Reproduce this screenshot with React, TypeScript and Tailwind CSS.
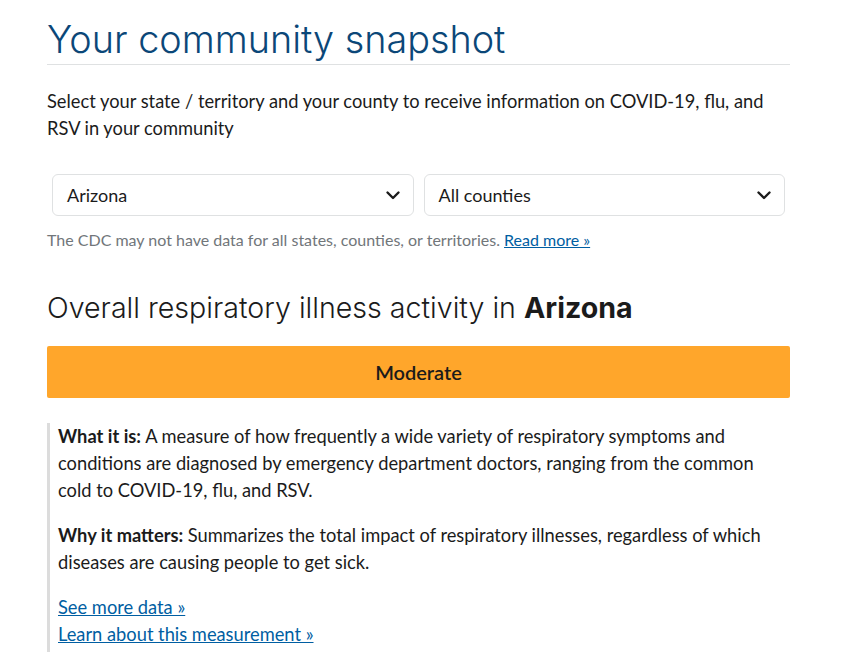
import React from 'react';

const Chevron: React.FC = () => (
  <svg width="16" height="16" viewBox="0 0 16 16" fill="none" aria-hidden="true">
    <path d="M2.5 5.5 8 11l5.5-5.5" stroke="#1b1b1b" strokeWidth="2.4" strokeLinecap="round" strokeLinejoin="round" />
  </svg>
);

const Select: React.FC<{ value: string }> = ({ value }) => (
  <div className="flex-1 h-[42px] flex items-center justify-between pl-[14px] pr-[12px] border border-[#dfe1e2] rounded-[6px] bg-white text-[18px] text-[#1b1b1b]">
    <span>{value}</span>
    <Chevron />
  </div>
);

export default function App() {
  return (
    <div className="bg-white min-h-screen font-['Lato',sans-serif] text-[#1b1b1b]">
      <div className="w-[743px] ml-[47px] pt-[17px]">
        {/* Page title */}
        <h1 className="font-['Inter',sans-serif] font-light text-[37.8px] leading-[45px] text-[#0b4778] pb-[2px] border-b border-[#dfe1e2]">
          Your community snapshot
        </h1>

        <p className="mt-[23px] text-[18.3px] leading-[27px]">
          Select your state / territory and your county to receive information on COVID-19, flu, and RSV in your community
        </p>

        {/* Location pickers */}
        <div className="mt-[32px] flex gap-[10px] px-[5px]">
          <Select value="Arizona" />
          <Select value="All counties" />
        </div>

        <p className="mt-[14px] text-[16px] leading-[20px] text-[#71767a]">
          The CDC may not have data for all states, counties, or territories.{' '}
          <a href="#" className="text-[#005ea2] underline">Read more »</a>
        </p>

        <h2 className="mt-[40px] font-['Inter',sans-serif] font-light text-[28.6px] leading-[36px] text-[#1b1b1b]">
          Overall respiratory illness activity in <span className="font-bold">Arizona</span>
        </h2>

        <div className="mt-[20px] h-[52px] flex items-center justify-center bg-[#ffa62b] rounded-[2px] text-[20px] font-semibold">
          Moderate
        </div>

        {/* Explanation */}
        <div className="mt-[25px] border-l-[3px] border-[#dcdcdc] pl-[8px] pb-[4px] text-[18.3px] leading-[27px]">
          <p>
            <span className="font-bold">What it is:</span> A measure of how frequently a wide variety of respiratory symptoms and conditions are diagnosed by emergency department doctors, ranging from the common cold to COVID-19, flu, and RSV.
          </p>
          <p className="mt-[18px]">
            <span className="font-bold">Why it matters:</span> Summarizes the total impact of respiratory illnesses, regardless of which diseases are causing people to get sick.
          </p>
          <div className="mt-[18px] flex flex-col">
            <a href="#" className="text-[#005ea2] underline w-fit">See more data »</a>
            <a href="#" className="text-[#005ea2] underline w-fit">Learn about this measurement »</a>
          </div>
        </div>
      </div>
    </div>
  );
}
